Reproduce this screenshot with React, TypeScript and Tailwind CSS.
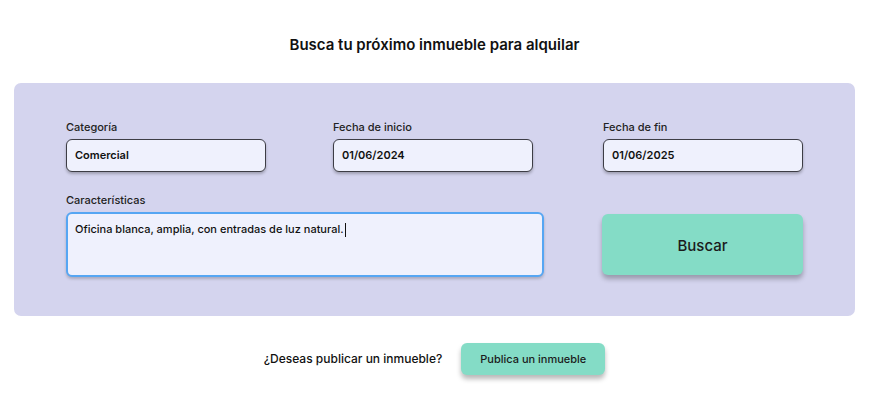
import React from "react";

export default function App() {
  const font = { fontFamily: "Inter, 'Noto Sans', sans-serif" };
  const inputCls =
    "w-[200px] h-[33px] rounded-[6px] border border-[#3d3d45] bg-[#eff1fd] px-[8px] text-[11px] font-semibold text-[#111] shadow-[0_2px_3px_rgba(0,0,0,0.25)] flex items-center";
  return (
    <div className="w-[869px] h-[409px] bg-white" style={font}>
      <div className="pt-[36px] text-center text-[15px] font-semibold text-[#111] leading-[18px]">
        Busca tu próximo inmueble para alquilar
      </div>
      <div className="mx-[14px] mt-[29px] h-[233px] rounded-[7px] bg-[#d4d4ee] px-[52px] pt-[38px]">
        <div className="flex w-[737px]">
          <div className="flex flex-col gap-[5px] w-[267px]">
            <label className="text-[11px] font-medium text-[#222] leading-[13px]">Categoría</label>
            <div className={inputCls}>Comercial</div>
          </div>
          <div className="flex flex-col gap-[5px] w-[270px]">
            <label className="text-[11px] font-medium text-[#222] leading-[13px]">Fecha de inicio</label>
            <div className={inputCls}>01/06/2024</div>
          </div>
          <div className="flex flex-col gap-[5px]">
            <label className="text-[11px] font-medium text-[#222] leading-[13px]">Fecha de fin</label>
            <div className={inputCls}>01/06/2025</div>
          </div>
        </div>
        <div className="flex justify-between items-end w-[737px] mt-[22px]">
          <div className="flex flex-col gap-[5px]">
            <label className="text-[11px] font-medium text-[#222] leading-[13px]">Características</label>
            <div className="w-[478px] h-[65px] rounded-[6px] border-2 border-[#56a6f3] bg-[#eff1fd] px-[7px] pt-[7px] text-[11px] font-medium text-[#111] shadow-[0_2px_3px_rgba(0,0,0,0.2)] leading-[16px]">
              Oficina blanca, amplia, con entradas de luz natural.
              <span className="inline-block w-[1px] h-[14px] bg-[#111] align-middle ml-[1px]" />
            </div>
          </div>
          <button className="w-[201px] h-[61px] mb-[2px] pt-[3px] rounded-[6px] bg-[#84dcc6] text-[15px] font-medium text-[#1b1b1b] shadow-[0_4px_5px_rgba(0,0,0,0.28)]">
            Buscar
          </button>
        </div>
      </div>
      <div className="mt-[27px] flex items-center justify-center gap-[19px]">
        <span className="text-[12px] font-medium text-[#111]">¿Deseas publicar un inmueble?</span>
        <button className="w-[144px] h-[32px] rounded-[6px] bg-[#84dcc6] text-[11px] font-medium text-[#1b1b1b] shadow-[0_4px_5px_rgba(0,0,0,0.28)]">
          Publica un inmueble
        </button>
      </div>
    </div>
  );
}
